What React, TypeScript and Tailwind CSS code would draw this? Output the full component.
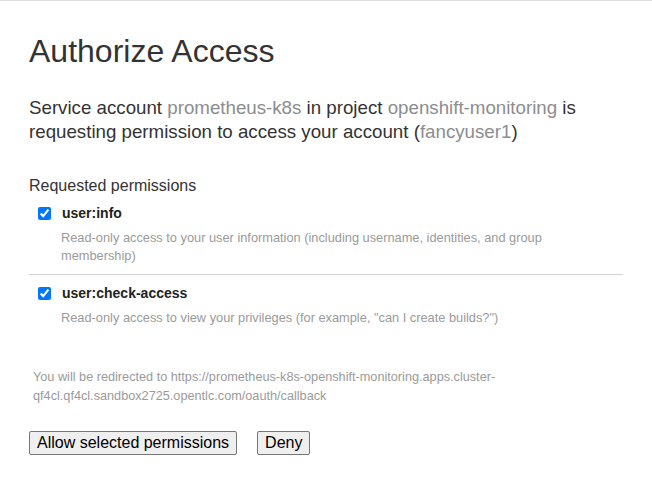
const permissions = [
  {
    name: "user:info",
    description:
      "Read-only access to your user information (including username, identities, and group membership)",
  },
  {
    name: "user:check-access",
    description:
      'Read-only access to view your privileges (for example, "can I create builds?")',
  },
];

const App = () => {
  return (
    <div className="min-h-screen border-t border-[#dddddd] bg-white px-[29px] pt-[33px] font-['Liberation_Sans',Arial,sans-serif] text-[#333333]">
      <h1 className="text-[32px] leading-[1.1]">Authorize Access</h1>

      <p className="mt-[27px] text-[18.72px] leading-[24px]">
        Service account <span className="text-[#8b8d8f]">prometheus-k8s</span> in project{" "}
        <span className="text-[#8b8d8f]">openshift-monitoring</span> is requesting permission to
        access your account (<span className="text-[#8b8d8f]">fancyuser1</span>)
      </p>

      <h4 className="mt-[32px] text-[16px] leading-[20px]">Requested permissions</h4>

      <div className="mt-[8px]">
        {permissions.map((perm, i) => (
          <div key={perm.name}>
            {i > 0 && <hr className="mt-[9px] mb-[9px] border-t border-[#d1d1d1]" />}
            <label className="flex items-center">
              <input type="checkbox" defaultChecked className="m-0 ml-[9px] h-[13px] w-[13px]" />
              <span className="ml-[11px] text-[14px] font-bold leading-[18px] text-[#222222]">
                {perm.name}
              </span>
            </label>
            <p className="mt-[7px] pl-[32px] pr-[12px] text-[12.8px] leading-[18px] text-[#9a9a9a]">
              {perm.description}
            </p>
          </div>
        ))}
      </div>

      <p className="mt-[41px] pl-[4px] text-[12.7px] leading-[19px] text-[#9a9a9a]">
        You will be redirected to
        https://prometheus-k8s-openshift-monitoring.apps.cluster-qf4cl.qf4cl.sandbox2725.opentlc.com/oauth/callback
      </p>

      <div className="mt-[25px] flex gap-[20px]">
        <button className="rounded-[2px] border border-[#767676] bg-[#efefef] px-[7px] py-[1px] text-[16px] leading-[20px] text-black">
          Allow selected permissions
        </button>
        <button className="rounded-[2px] border border-[#767676] bg-[#efefef] px-[7px] py-[1px] text-[16px] leading-[20px] text-black">
          Deny
        </button>
      </div>
    </div>
  );
};

export default App;
